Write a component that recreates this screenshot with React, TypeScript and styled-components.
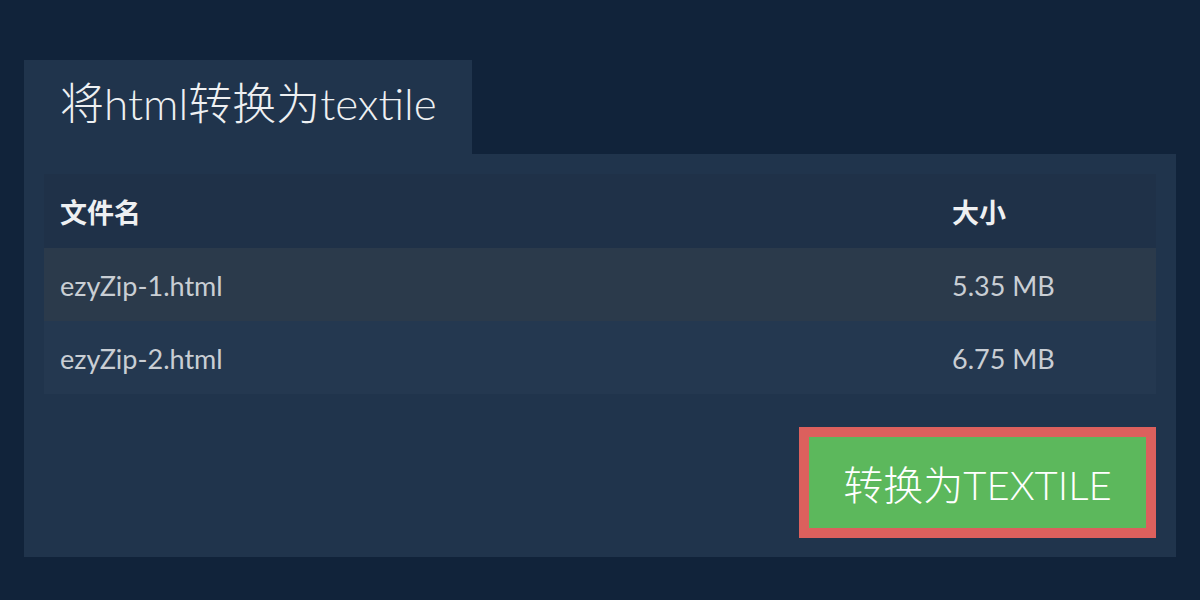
import React from "react";
import styled, { createGlobalStyle } from "styled-components";

const Global = createGlobalStyle`
  html, body {
    margin: 0;
    padding: 0;
    background: #11233a;
    font-family: Lato, "Noto Sans CJK SC", sans-serif;
  }
`;

const Page = styled.div`
  width: 1200px;
  height: 600px;
  padding: 60px 24px 0;
  box-sizing: border-box;
`;

const Tab = styled.div`
  display: inline-block;
  background: #20344c;
  height: 94px;
  padding: 0 35px 0 36px;
  box-sizing: border-box;
  color: #eef0f2;
  font-size: 44px;
  font-weight: 300;
  line-height: 86px;
`;

const Panel = styled.div`
  background: #20344c;
  padding: 20px 20px 20px;
  height: 403px;
  box-sizing: border-box;
  display: flex;
  flex-direction: column;
`;

const Table = styled.div`
  display: flex;
  flex-direction: column;
`;

const Row = styled.div<{ $bg: string; $h: number }>`
  display: grid;
  grid-template-columns: 892px 1fr;
  align-items: center;
  height: ${({ $h }) => $h}px;
  padding-left: 16px;
  background: ${({ $bg }) => $bg};
`;

const HeadCell = styled.div`
  color: #eef0f2;
  font-size: 27px;
  font-weight: 700;
`;

const Cell = styled.div`
  color: #c9ced4;
  font-size: 27px;
  padding-top: 2px;
`;

const Actions = styled.div`
  display: flex;
  justify-content: flex-end;
  margin-top: 33px;
`;

const Button = styled.button`
  width: 357px;
  height: 111px;
  box-sizing: border-box;
  border: 10px solid #dc605d;
  background: #5cb85c;
  color: #ffffff;
  font-family: Lato, "Noto Sans CJK SC", sans-serif;
  font-size: 40px;
  font-weight: 300;
  padding: 0;
`;

const files = [
  { name: "ezyZip-1.html", size: "5.35 MB", bg: "#2b3a4b" },
  { name: "ezyZip-2.html", size: "6.75 MB", bg: "#243850" },
];

export default function App() {
  return (
    <Page>
      <Global />
      <Tab>将html转换为textile</Tab>
      <Panel>
        <Table>
          <Row $bg="#1f3148" $h={74}>
            <HeadCell>文件名</HeadCell>
            <HeadCell>大小</HeadCell>
          </Row>
          {files.map((f) => (
            <Row key={f.name} $bg={f.bg} $h={73}>
              <Cell>{f.name}</Cell>
              <Cell>{f.size}</Cell>
            </Row>
          ))}
        </Table>
        <Actions>
          <Button>转换为TEXTILE</Button>
        </Actions>
      </Panel>
    </Page>
  );
}
